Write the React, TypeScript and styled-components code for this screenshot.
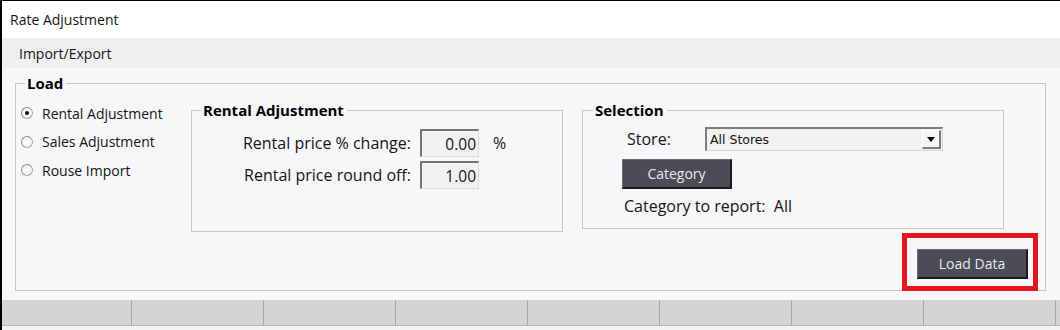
import React from 'react';
import styled, { createGlobalStyle } from 'styled-components';

const GlobalStyle = createGlobalStyle`
  html, body {
    margin: 0;
    padding: 0;
    background: #ffffff;
  }
  body {
    font-family: "Open Sans", "Noto Sans", sans-serif;
    font-size: 14px;
    color: #151515;
  }
`;

const Window = styled.div`
  width: 1060px;
  height: 330px;
  box-sizing: border-box;
  border-left: 2px solid #000;
  border-top: 1px solid #000;
  display: flex;
  flex-direction: column;
  overflow: hidden;
`;

const TitleBar = styled.div`
  height: 37px;
  flex-shrink: 0;
  background: #ffffff;
  padding-left: 8px;
  display: flex;
  align-items: center;
`;

const MenuBar = styled.div`
  height: 30px;
  flex-shrink: 0;
  background: #f0f0f2;
  padding-left: 17px;
  display: flex;
  align-items: center;
`;

const Content = styled.div`
  flex: 1;
  background: #f7f6f9;
  padding: 6px 14px 0 13px;
`;

const Group = styled.fieldset<{ $width?: number; $height?: number }>`
  margin: 0;
  padding: 0;
  border: 1px solid #c6c6c8;
  box-sizing: border-box;
  min-width: 0;
  ${(p) => (p.$width ? `width: ${p.$width}px; flex-shrink: 0;` : '')}
  ${(p) => (p.$height ? `height: ${p.$height}px;` : '')}
`;

const Legend = styled.legend<{ $offset: number }>`
  margin-left: ${(p) => p.$offset}px;
  padding: 0 3px 0 2px;
  font-size: 15px;
  font-weight: 700;
  line-height: 18px;
  color: #000;
`;

const LoadBody = styled.div`
  padding: 9px 0 0 0;
`;

const GroupsRow = styled.div`
  display: flex;
  align-items: flex-start;
  gap: 19px;
`;

const RadioList = styled.div`
  width: 170px;
  margin: -2px -19px 0 5px;
  display: flex;
  flex-direction: column;
  flex-shrink: 0;
`;

const RadioRow = styled.label`
  height: 28.5px;
  display: flex;
  align-items: center;
  gap: 9px;
`;

const RadioDot = styled.span<{ $checked?: boolean }>`
  width: 10px;
  height: 10px;
  border-radius: 50%;
  border: 1px solid #a8a8a8;
  border-top-color: #8c8c8c;
  border-left-color: #8c8c8c;
  background: radial-gradient(circle at 50% 50%, #ffffff 0%, #ececec 100%);
  display: flex;
  align-items: center;
  justify-content: center;
  flex-shrink: 0;
  &::after {
    content: '';
    width: 4px;
    height: 4px;
    border-radius: 50%;
    background: ${(p) => (p.$checked ? '#111' : 'transparent')};
  }
`;

const FieldGrid = styled.div`
  display: grid;
  grid-template-columns: 219px 59px auto;
  grid-auto-rows: 28px;
  column-gap: 9px;
  row-gap: 4px;
  padding-top: 10px;
  align-items: center;
  font-size: 16px;
`;

const FieldLabel = styled.span`
  text-align: right;
`;

const NumberBox = styled.input`
  box-sizing: border-box;
  width: 59px;
  height: 28px;
  margin: 0;
  padding: 0 2px 0 0;
  border-style: solid;
  border-width: 2px 1px 1px 2px;
  border-color: #747474 #dcdcdc #dcdcdc #747474;
  background: #f2f2f3;
  font-family: inherit;
  font-size: 15.5px;
  color: #151515;
  text-align: right;
  outline: none;
`;

const Unit = styled.span`
  padding-left: 5px;
`;

const SelectionBody = styled.div`
  padding: 8px 0 0 0;
  display: flex;
  flex-direction: column;
  align-items: flex-start;
  font-size: 16px;
`;

const StoreRow = styled.div`
  display: flex;
  align-items: center;
`;

const StoreLabel = styled.span`
  width: 78px;
  padding-left: 44px;
`;

const Select = styled.div`
  box-sizing: border-box;
  width: 238px;
  height: 24px;
  border-style: solid;
  border-width: 2px 1px 1px 2px;
  border-color: #7c7c7c #d6d6d6 #d6d6d6 #7c7c7c;
  background: #f2f2f3;
  display: flex;
  align-items: center;
  justify-content: space-between;
  padding-left: 3px;
  font-family: "DejaVu Sans", sans-serif;
  font-size: 12.5px;
  color: #111;
`;

const DropButton = styled.span`
  box-sizing: border-box;
  width: 19px;
  height: 19px;
  margin-right: 1px;
  background: #f4f4f4;
  border-style: solid;
  border-width: 1px 2px 2px 1px;
  border-color: #ffffff #7a7a7a #7a7a7a #ffffff;
  display: flex;
  align-items: center;
  justify-content: center;
  &::after {
    content: '';
    border-left: 4px solid transparent;
    border-right: 4px solid transparent;
    border-top: 5px solid #000;
    margin-top: 1px;
  }
`;

const DarkButton = styled.button<{ $width: number }>`
  box-sizing: border-box;
  width: ${(p) => p.$width}px;
  height: 30px;
  margin: 0;
  padding: 0;
  background: #4b4c55;
  border-style: solid;
  border-width: 1px 2px 2px 1px;
  border-color: #6a6b73 #1c1c20 #1c1c20 #6a6b73;
  color: #e8e8ec;
  font-family: inherit;
  font-size: 14px;
  cursor: pointer;
`;

const CategoryButton = styled(DarkButton)`
  margin: 8px 0 0 39px;
`;

const ReportLine = styled.div`
  margin: 8px 0 0 41px;
  line-height: 18px;
`;

const ActionRow = styled.div`
  display: flex;
  justify-content: flex-end;
  margin-top: 1px;
`;

const Highlight = styled.div`
  border: 5px solid #e3171d;
  padding: 11px 5px 7px 10px;
  margin: 0 7px -1px 0;
`;

const StatusBar = styled.div`
  height: 25px;
  flex-shrink: 0;
  background: #d4d3d5;
  border-bottom: 1px solid #b8b8ba;
  display: flex;
`;

const StatusPanel = styled.div<{ $width: number }>`
  width: ${(p) => p.$width}px;
  flex-shrink: 0;
  border-right: 1px solid #a9a9ab;
`;

const BottomStrip = styled.div`
  height: 4px;
  flex-shrink: 0;
  background: #f4f4f6;
`;

const radios = [
  { label: 'Rental Adjustment', checked: true },
  { label: 'Sales Adjustment', checked: false },
  { label: 'Rouse Import', checked: false },
];

const App = () => {
  return (
    <>
      <GlobalStyle />
      <Window>
        <TitleBar>Rate Adjustment</TitleBar>
        <MenuBar>Import/Export</MenuBar>
        <Content>
          <Group>
            <Legend $offset={9}>Load</Legend>
            <LoadBody>
              <GroupsRow>
                <RadioList>
                  {radios.map((r) => (
                    <RadioRow key={r.label}>
                      <RadioDot $checked={r.checked} />
                      {r.label}
                    </RadioRow>
                  ))}
                </RadioList>
                <Group $width={372} $height={131}>
                  <Legend $offset={9}>Rental Adjustment</Legend>
                  <FieldGrid>
                    <FieldLabel>Rental price % change:</FieldLabel>
                    <NumberBox readOnly value="0.00" />
                    <Unit>%</Unit>
                    <FieldLabel>Rental price round off:</FieldLabel>
                    <NumberBox readOnly value="1.00" />
                    <span />
                  </FieldGrid>
                </Group>
                <Group $width={422} $height={128}>
                  <Legend $offset={10}>Selection</Legend>
                  <SelectionBody>
                    <StoreRow>
                      <StoreLabel>Store:</StoreLabel>
                      <Select>
                        All Stores
                        <DropButton />
                      </Select>
                    </StoreRow>
                    <CategoryButton $width={110}>Category</CategoryButton>
                    <ReportLine>Category to report:&nbsp; All</ReportLine>
                  </SelectionBody>
                </Group>
              </GroupsRow>
              <ActionRow>
                <Highlight>
                  <DarkButton $width={111}>Load Data</DarkButton>
                </Highlight>
              </ActionRow>
            </LoadBody>
          </Group>
        </Content>
        <StatusBar>
          {Array.from({ length: 8 }).map((_, i) => (
            <StatusPanel key={i} $width={i === 0 ? 129 : 131} />
          ))}
        </StatusBar>
        <BottomStrip />
      </Window>
    </>
  );
};

export default App;
